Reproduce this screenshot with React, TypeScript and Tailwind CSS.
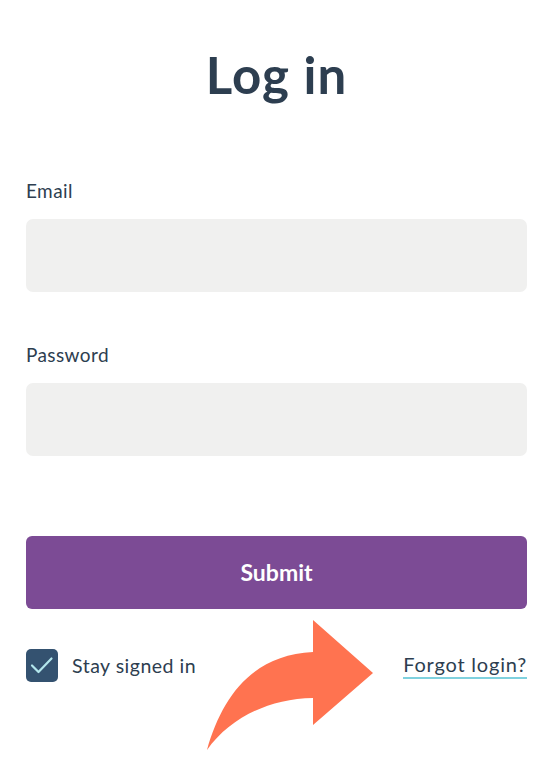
export default function App() {
  return (
    <div className="min-h-[768px] w-[557px] bg-white font-['Lato',sans-serif] text-[#2d3e50]">
      <div className="pl-[26px] pr-[30px] pt-[40px]">
        <h1 className="text-center text-[51px] font-bold leading-[70px] tracking-[1px]">Log in</h1>

        <div className="mt-[70px]">
          <label className="block text-[19px] leading-[22px] tracking-[0.4px]">Email</label>
          <div className="mt-[17px] h-[73px] rounded-[7px] bg-[#f0f0ef]" />
        </div>

        <div className="mt-[52px]">
          <label className="block text-[19px] leading-[22px] tracking-[0.4px]">Password</label>
          <div className="mt-[17px] h-[73px] rounded-[7px] bg-[#f0f0ef]" />
        </div>

        <button className="mt-[80px] flex h-[73px] w-full items-center justify-center rounded-[6px] bg-[#7c4b95] text-[23px] font-bold text-white">
          Submit
        </button>

        <div className="relative mt-[40px] flex items-center justify-between">
          <div className="flex items-center gap-[14px]">
            <div className="h-[33px] w-[32px] rounded-[5px] bg-[#345270]">
              <svg width="32" height="33" viewBox="0 0 32 33" fill="none">
                <path d="M6 16.5 L12.5 23 L25.5 9.5" stroke="#b3e6ec" strokeWidth="2.2" strokeLinecap="round" strokeLinejoin="round" />
              </svg>
            </div>
            <span className="text-[19.5px] tracking-[0.5px]">Stay signed in</span>
          </div>
          <a className="border-b-2 border-[#7fd1de] pb-[1px] text-[20px] leading-[24px] tracking-[0.8px]">Forgot login?</a>
        </div>
      </div>

      <svg className="absolute left-0 top-0" width="557" height="768" viewBox="0 0 557 768">
        <path
          d="M313,620 L373,673 L313,725 L313,698 C268,699 230,718 207,750 C222,697 252,655 313,652 Z"
          fill="#ff7350"
        />
      </svg>
    </div>
  );
}
